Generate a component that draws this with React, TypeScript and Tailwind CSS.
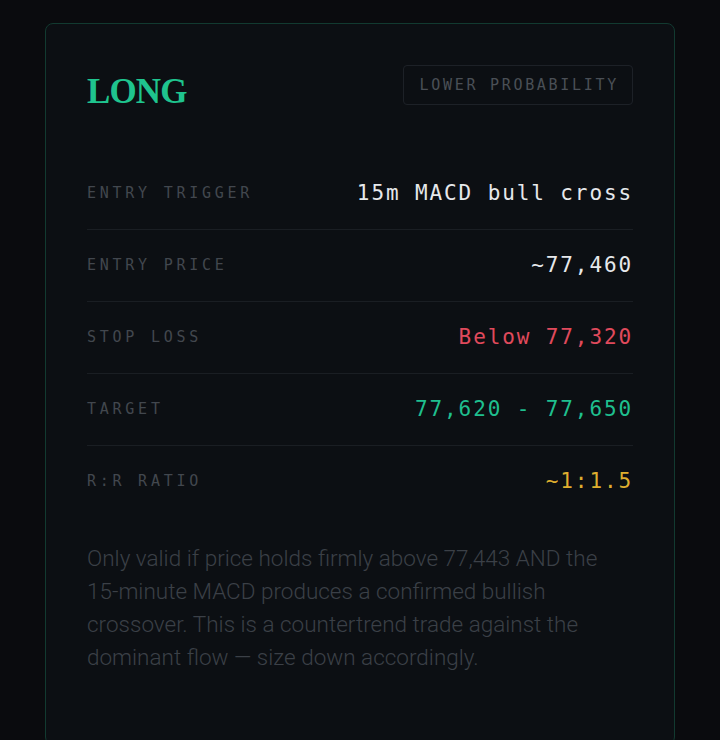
const mono = { fontFamily: '"DejaVu Sans Mono", "Liberation Mono", monospace' };

interface Row {
    label: string;
    value: string;
    color: string;
}

const rows: Row[] = [
    { label: "Entry Trigger", value: "15m MACD bull cross", color: "text-[#e6e8eb]" },
    { label: "Entry Price", value: "~77,460", color: "text-[#e6e8eb]" },
    { label: "Stop Loss", value: "Below 77,320", color: "text-[#e04a5c]" },
    { label: "Target", value: "77,620 - 77,650", color: "text-[#1fbf8e]" },
    { label: "R:R Ratio", value: "~1:1.5", color: "text-[#dfae2f]" },
];

function SetupRow({ row }: { row: Row }) {
    return (
        <div className="flex items-center justify-between py-[22px]">
            <span
                className="text-[15px] leading-[27px] uppercase tracking-[0.25em] text-[#42474e]"
                style={mono}
            >
                {row.label}
            </span>
            <span
                className={`text-[21px] leading-[27px] tracking-[0.09em] ${row.color}`}
                style={mono}
            >
                {row.value}
            </span>
        </div>
    );
}

export default function App() {
    return (
        <div className="min-h-[740px] bg-[#0a0b0e] px-[45px] pt-[23px]">
            <div className="rounded-lg border border-[#123a30] bg-[#0c0f13] px-[41px] pt-[41px] pb-[70px]">
                <div className="flex items-start justify-between">
                    <h2
                        className="mt-[9px] text-[35px] leading-[35px] font-bold tracking-tight text-[#1fc48e]"
                        style={{ fontFamily: '"Liberation Serif", "DejaVu Serif", serif' }}
                    >
                        LONG
                    </h2>
                    <div
                        className="flex h-10 items-center rounded-[4px] border border-[#1d2127] pl-4 pr-[13px] text-[15px] tracking-[0.18em] text-[#4a4f56]"
                        style={mono}
                    >
                        LOWER PROBABILITY
                    </div>
                </div>

                <div className="mt-[49px] flex flex-col divide-y divide-[#1a1e23]">
                    {rows.map((r) => (
                        <SetupRow key={r.label} row={r} />
                    ))}
                </div>

                <p
                    className="mt-[25px] text-[22.5px] leading-[33px] font-light text-[#3b4047]"
                    style={{ fontFamily: 'Roboto, "Liberation Sans", sans-serif' }}
                >
                    Only valid if price holds firmly above 77,443 AND the 15-minute MACD produces a
                    confirmed bullish crossover. This is a countertrend trade against the dominant
                    flow — size down accordingly.
                </p>
            </div>
        </div>
    );
}
